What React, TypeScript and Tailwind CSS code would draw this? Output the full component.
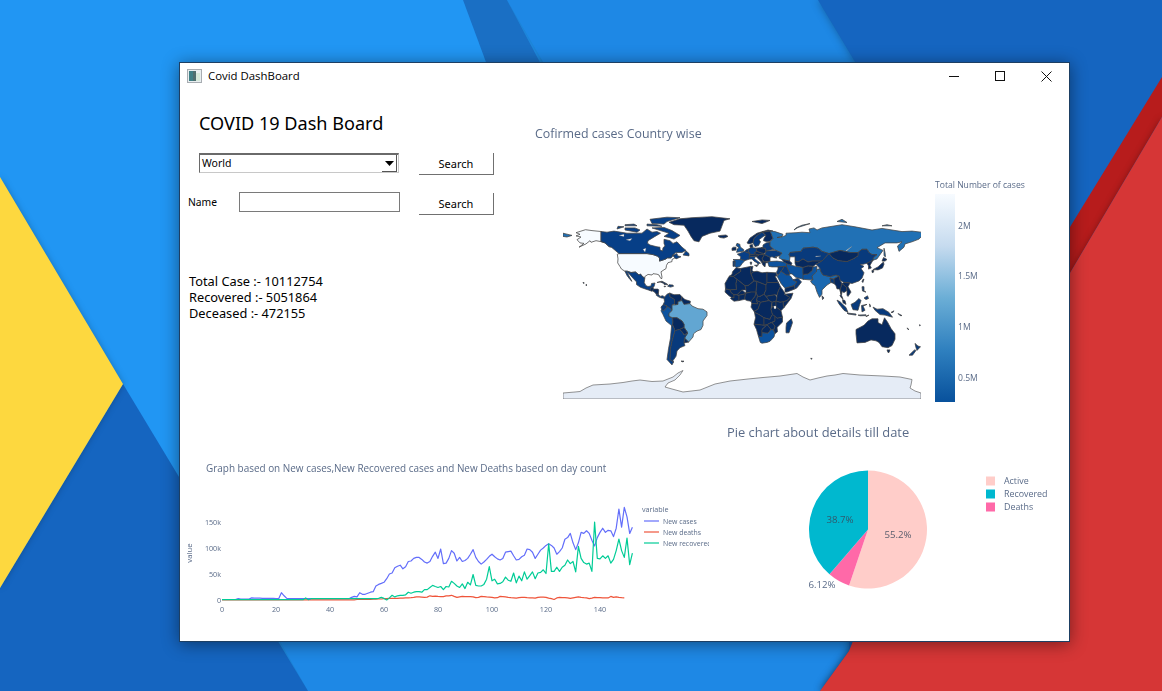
import React from "react";

const D = "#07295e", C = "#083a7c", N = "#073f87", M = "#0d539f", I = "#1a68b0", R = "#2171b5", B = "#62a6d2", U = "#f7fbff", W = "#ffffff";

const land: [string, number[]][] = [
  [R, [-179,68,-170,66,-175,64.5,-179,65]],
  [U, [-141,69.6,-141,60.3,-137,59,-133,55.5,-130.5,55,-135,59,-140,60,-146,61,-151,59.5,-152,61,-156,58,-163,55,-158,58.5,-162,59,-165,62,-161,64.5,-166,65.5,-162,67,-166,68.5,-156.5,71.3,-150,70.5]],
  [U, [-124.7,48.4,-123,49,-95,49,-89,48,-84.5,46.5,-82.5,45,-82.5,42,-79,43,-76,44,-74.7,45,-71,45,-69,47.3,-67,45,-70,43.5,-70,41.5,-74,40.5,-75.5,38,-76,35,-78,33.8,-81,32,-80,27,-80.5,25.2,-82,27,-83,29,-85,29.7,-89,30.2,-90,29,-94,29.5,-97.2,27.5,-97.2,26,-99.5,27.5,-101.5,29.8,-103,29,-106.5,31.8,-111,31.3,-114.8,32.5,-117.1,32.5,-120.5,34.5,-122,36.8,-124.3,40.3,-124,44]],
  [N, [-141,69.6,-135,69,-128,70,-115,68,-108,68,-100,68,-95,72,-90,69,-85,69.5,-81.5,68,-87,65,-94,61,-94.5,58.7,-92,57,-85,55.3,-82,55,-82,52.5,-79.5,51.3,-79,54.5,-77,56,-78,58.5,-78,62.3,-72,61,-69,58.5,-65,60,-60,55,-56,52,-60,50,-66,50,-70,47,-65,49,-64.5,47,-61,46,-66,44,-67,45,-69,47.3,-71,45,-74.7,45,-76,44,-79,43,-82.5,42,-82.5,45,-84.5,46.5,-89,48,-95,49,-123,49,-130,54.5,-130.5,55,-133,55.5,-137,59,-141,60.3]],
  [N, [-62,66,-68,62.5,-73,64,-78,65,-73,68,-80,70,-90,73,-78,73.5,-70,70.5]],
  [N, [-117,71,-105,69,-102,71,-107,73,-117,73]],
  [N, [-90,77,-78,76.5,-75,79,-62,82.5,-75,83,-92,81]],
  [N, [-125,72,-118,74,-124,74.5]],
  [N, [-95,75,-80,74.5,-85,76,-95,76.5]],
  [N, [-117,75,-105,75,-108,76.5,-117,76]],
  [N, [-59,47.7,-53,46.8,-53,49,-56,51.5]],
  [W, [-123,66,-118,67,-118,65]],
  [W, [-116,62,-110,63,-112,61]],
  [W, [-99,53,-96,54,-97,50.5]],
  [D, [-73,78.2,-68,76,-58,75.5,-54,70,-51,65,-48,61,-43,60,-40,65,-32,68,-22,70,-20,75,-18,80,-12,81.5,-30,83.5,-50,82.5,-62,81.5]],
  [D, [-24,65.5,-22,64,-18,63.5,-14,65,-16,66.4,-21,66]],
  [N, [-117.1,32.5,-114.8,32.5,-111,31.3,-106.5,31.8,-103,29,-101.5,29.8,-99.5,27.5,-97.2,26,-97.8,22,-96,19,-94,18.2,-91,18.7,-90.5,21,-87,21.5,-88,18,-89,17.8,-91,17,-92,14.5,-96,15.7,-101.5,17.5,-105.5,20,-105.5,22.5,-109,26,-112.7,30,-114.7,31.5,-113,28,-110,23,-112,24.8,-115,28.5]],
  [D, [-92,14.5,-91,17,-89,17.8,-88.5,15.8,-89.5,14,-90.5,13.8]],
  [D, [-89.5,14,-88.5,15.8,-84,15.8,-83.2,15,-83.7,11,-85.7,11,-87.5,13]],
  [C, [-85.7,11,-83.7,11,-82,9,-79.5,9.6,-77.3,8.5,-78,7.3,-80.5,7.5,-83,8.3,-85.7,10]],
  [D, [-85,22,-80,23.2,-75,20.7,-74.2,20,-77.7,19.9,-78,21,-82,22.5]],
  [C, [-74.4,18.5,-73,19.9,-69,19.5,-68.5,18.4,-71.5,17.7]],
  [C, [-78,18.5,-76.3,18.2,-77.5,17.8]],
  [C, [-156,20.2,-155,19.6,-156,19]],
  [C, [-159,22.2,-157.7,21.5,-158.5,21]],
  [C, [-77.3,8.5,-75,11,-72,12.2,-72.2,9,-67.5,6.2,-67.5,2,-70,1,-69.5,-4.2,-72,-2.3,-75,-0.1,-78.8,1.4,-77.5,4,-78,7.3]],
  [D, [-72,12,-68,10.6,-62,10.7,-60,8.5,-61,5,-64,4,-64,1.5,-67,1,-67.5,2,-67.5,6.2,-72.2,9]],
  [D, [-60,8.5,-57,6,-51.6,4.5,-52,2.2,-58,1.5,-60,1.5,-61,5]],
  [C, [-78.8,1.4,-75,-0.1,-75.5,-2,-78.5,-4.8,-80.3,-3.4,-81,-1]],
  [M, [-81,-4.5,-80.3,-3.4,-78.5,-4.8,-75.5,-2,-75,-0.1,-72,-2.3,-69.9,-4.2,-73,-7,-73,-9.5,-69.5,-11,-69,-15,-69.5,-17.5,-70.4,-18.3,-76,-14,-79,-8]],
  [B, [-60,5,-58,1.5,-52,2.2,-50,0,-44,-2.5,-39,-3,-35,-5.5,-35,-9,-39,-14,-39,-18,-41,-22,-45,-23.5,-48.5,-26,-49,-29,-53.4,-33.7,-57.5,-30,-54.5,-25.5,-55,-24,-58,-20,-58,-17,-60,-14,-65,-11,-69.5,-11,-73,-9.5,-73,-7,-69.9,-4.2,-70,1,-67,1,-64,1.5,-64,4]],
  [D, [-69.5,-11,-65,-11,-60,-14,-58,-17,-58,-20,-62.5,-22,-67,-23,-69.5,-17.5,-69,-15]],
  [D, [-62.5,-22,-58,-20,-55,-24,-54.5,-25.5,-58,-27,-60,-24]],
  [D, [-57.5,-30,-53.4,-33.7,-58,-34.5]],
  [N, [-70.4,-18.3,-69.5,-17.5,-67,-23,-70,-33,-71.5,-40,-72,-50,-68.5,-52.3,-70,-55,-75,-50,-73.5,-40,-71.5,-30]],
  [C, [-67,-23,-62.5,-22,-60,-24,-58,-27,-54.5,-25.5,-57.5,-30,-58,-34.5,-57,-37,-62,-39,-65,-42,-66,-47,-69,-51,-68.5,-52.3,-72,-50,-71.5,-40,-70,-33]],
  [D, [-61,-51.5,-58,-51.5,-59,-52.3]],
  [M, [-5.5,50.2,1.5,51.2,1.7,52.8,-1,54.5,-2,56,-2,57.6,-5,58.6,-6,56.5,-3,54.5,-5,53,-5,51.7]],
  [D, [-10,52,-6,52.2,-6,55,-8.5,55,-10,54]],
  [N, [-1.8,43.4,3,42.5,7.5,43.8,8,49,2.5,51,-1.5,49.5,-4.7,48.4,-1.2,46]],
  [M, [-9,43.5,-1.8,43.4,3,42.5,0,39.5,-2,36.8,-5.5,36,-7.3,37.2,-7,42]],
  [C, [-9,42,-7,42,-7.3,37.2,-9,37]],
  [N, [6,51,7,53.5,9,54.8,14,54,15,51,12.5,50,13.5,48.5,8,47.7,8,49]],
  [C, [2.5,51,8,49,6,51,7,53.5,4.5,52.5]],
  [D, [7,46,8,47.7,13.5,48.5,17,48,16,46.6,10,46.5]],
  [N, [7.5,43.8,7,46,13.7,46.5,12.5,44.5,16,41.7,18.5,40,16.5,39.5,16,38,15.5,40,12,42,10,44]],
  [C, [12.5,38,15.5,38.2,15,36.8]],
  [C, [8.2,41,9.7,41,9.5,39,8.5,39]],
  [D, [14,54,19,54.5,23.5,54,24,50.5,22,49,19,49.5,15,51]],
  [D, [12.5,50,15,51,19,49.5,22,49,22.5,48,17,48,13.5,48.5]],
  [D, [13.7,46.5,16,46.6,17,48,22.5,48,20,44,22,41,19.5,41,17,43.5]],
  [D, [19.5,41,26,41,23.5,40,23,36.5,21,38]],
  [D, [22.5,48,28,45.5,28,42,22.5,41.2,20,44]],
  [C, [24,50.5,24,51.5,34,52,40,49.5,38,47,33,46,35,45,33,45,30,46,28,45.5,22.5,48]],
  [C, [23.5,54,24,51.5,32,53,28,56,28,59.5,24,59,21,57,21,55,19,54.5]],
  [D, [5,59,7,58,10.5,59,11,59,12,63,15,66,20,69,28,70,31,70,26,71,15,68,8,63.5]],
  [C, [11,59,13,55.5,16.5,56.5,18.5,60,17,62,22,65.5,24,66,20,69,15,66,12,63]],
  [D, [24,66,22,63,21.5,61,25,60,28,60.5,31,63,29,68,28,70,20.5,69]],
  [D, [8,55,9,54.8,11,55,10.5,57.5,8,57]],
  [R, [28,70,33,69.5,41,67,40,65,35,64,38,64,44,66,44,68,54,68.5,60,69,68,68.5,67,72,72,73,75,71,80,73,87,74,100,76,113,74,130,71,140,72.5,160,69.5,170,70,179.5,69,179.5,65,177,62.5,170,60,163,58,162,55,157,51,155.5,56,160,60,155,59,143,59,135,54.5,141,52,135,44,131,42.8,131,45,135,48,130,48,127,50,125,53,120,53,116,50,108,50,98,52,87,49,80,51,76,54,71,55,61,54,59,51,48,50,47,48,48,46,47.5,42,40,43.5,37,45,38,47,40,49.5,34,52,32,53,28,56,28,60,31,63,29,68]],
  [W, [104,52,110,55.8,109,55,104.5,51.5]],
  [R, [142,54,143,50,143.5,46,142,47,142,50]],
  [R, [52,71,56,73.5,68,77,60,75.5,54,73]],
  [R, [95,79,105,78,100,81]],
  [R, [140,75,150,75,145,76]],
  [D, [10,79,20,80.5,28,80,20,77]],
  [C, [48,50,59,51,61,54,71,55,76,54,80,51,87,49,80,42,70,42,66,41,61,44,56,41,53,42,53,46,48,46,47,48]],
  [W, [73.5,46,79,46.8,74,46.6]],
  [D, [53,42,56,41,61,44,66,41,70,42,80,42,74,39,71,37,66,37.5,61,36,54,37.5,53,40]],
  [D, [40,43.5,47.5,42,50,40,49,38,44.5,39.5,42,41]],
  [M, [26,40,26,41.5,35,42,42,41,44.5,39.5,44.5,37,36,36.5,30,36.5,27,37]],
  [M, [44.5,39.5,49,38,54,37,61,36,61,31,63,27,61.5,25,57,26,54,26.5,50,30,48,30,46,34,44.5,37]],
  [C, [42,37,44.5,37,46,34,48,30,47,29,44,29,39,32.5,41,35]],
  [C, [36,36.5,42,37,41,35,39,32.5,37,29.5,35,29.5,34.5,31.5,36,34.5]],
  [M, [35,28,37,29.5,39,32.5,44,29,47,29,48.5,28,51,24.5,55,22.5,52,19,45,17,43,16.5,39,21]],
  [D, [43,13,43,16.5,45,17,52,19,53,16,45,13]],
  [C, [51,24.5,56,26,59.5,22.5,55,17,53,16,52,19,55,22.5]],
  [M, [61,25,67,24.5,71,24.5,70,28,74.5,32,75,37,71,36.5,70,33,66,30,61,29.5]],
  [D, [61,36,66,37.5,71,37,71,36.5,70,33,66,30,61,29.5]],
  [I, [70,21,73,19,75,13,77.5,8,80,11,80,15,85,19.5,89,22,88,26,92,25.5,97,28,94,29,88,27.5,81,29,79,32,78,35,74.5,34,74.5,32,70,28,71,24.5,68.5,23.5]],
  [D, [80,9.5,82,7.5,80.5,6]],
  [C, [74,39,80,42,87,49,91,45,96,42.5,105,41.5,112,44.5,116,47,116,50,120,53,125,53,127,50,130,48,135,48,131,45,131,42.8,125,40,121,39,118,39,122,37,119,35,122,31,120,26,117,23.5,110,21,108,21.5,102,22,98,24,97,28,94,29,88,27.5,81,29,79,32,78,35]],
  [D, [87,49,98,52,108,50,116,50,116,47,112,44.5,105,41.5,96,42.5,91,45]],
  [D, [125,40,131,42.8,128,38,129.3,35.5,126.5,34.5,126.5,37.5]],
  [D, [131,34,136,36.5,140,40,141.5,41,142,39,140.5,35.5,136,33.7]],
  [D, [140,42,141.5,45.3,145,43.5,143,42]],
  [D, [130,33.5,132,33,131,31,130,31.5]],
  [D, [92,21,92,25.5,97,28,98,24,100,21,98.5,16,99,11,97.5,16,95,16,94,19]],
  [D, [98.5,16,100,21,104.5,17.5,105,14.5,102,12.5,100,13.5,99.5,10,101,6.5,99,8,98,10,99,11]],
  [D, [100,21,102,22,108,21.5,106,18,109,13,106,9,105,10,105,14.5,104.5,17.5]],
  [D, [100.5,6,103,5,104,1.5,101,3]],
  [C, [88,26,92,25,92,21,89,22]],
  [C, [95,5.5,98,4,104,-1.5,106,-6,102,-4,97,2]],
  [C, [105,-6.5,114,-7.5,114,-8.5,106,-7.5]],
  [C, [116,-8.5,124,-8.2,124,-9,118,-9.2]],
  [C, [124,-10,127,-8.5,124,-9.5]],
  [C, [109,1.5,113,3.5,117,7,119,5,117.5,1,116,-4,111,-3.5]],
  [C, [119.5,0.5,125,1.5,121,0,123,-4,120,-5.5]],
  [C, [127.5,2,128.5,0,128,-1]],
  [C, [131,-1,135,-3,141,-2.5,147,-6,150.5,-10.5,143,-8.5,138,-8,133,-4]],
  [C, [149,-6,152,-4.5,151,-6]],
  [C, [156,-7,160,-9,158,-9]],
  [C, [165,-20.5,167,-22,166,-22]],
  [C, [177.5,-17.5,178.5,-18,177.5,-18.5]],
  [C, [120,18,122,18,122,14,124,13,120.5,14]],
  [C, [122,7.5,125.5,9.5,126.5,7,124,6]],
  [D, [121,25,122,25,120.8,22,120,23]],
  [D, [114,-22,122,-18,126,-14,130,-12,136,-12,136,-15.5,140,-17.5,142.5,-11,145.5,-15,149,-21,153,-26,153,-31,150,-37,146,-39,140,-38,137,-34,134,-32.5,129,-31.7,123,-34,115,-34.5,114,-26]],
  [D, [145,-41,148,-41,147,-43.5,146,-43.5]],
  [C, [173,-35,176,-37.5,178.5,-38,175,-41.5,174,-39]],
  [C, [172.5,-41,174,-41.5,170.5,-46,167,-46]],
  [C, [49.3,-12,50.5,-15.5,47,-25,44,-25,44,-20,44.5,-16]],
  [C, [68.8,-48.8,70.2,-49.2,69.2,-49.8]],
  [D, [-6,35.8,-2,35,-1,32.5,-5,30,-8.7,27.7,-13,27.7,-10,29.5,-9.5,32]],
  [D, [-13,27.7,-8.7,27.7,-5,25,-6,21,-5.5,15.5,-12,15,-16.5,16,-17,21]],
  [D, [-2,35,8.5,37,9,30,12,23.5,6,19,3,19,-5,25,-8.7,27.7,-5,30,-1,32.5]],
  [D, [8.5,37,11,37,10,33.5,11.5,32,9,30]],
  [D, [11.5,32,15,32.5,20,31,25,31.5,25,20,24,19.5,15,23,12,23.5,9,30]],
  [D, [25,31.5,34,31,35,28,33,28,36.5,22,25,22]],
  [D, [-12,15,-5.5,15.5,-6,21,-5,25,3,19,4,15,0,15,-5,10.5,-8,10.5,-11,12.5]],
  [D, [3,19,6,19,12,23.5,15,23,14,13,9,13,4,12,4,15]],
  [D, [15,23,24,19.5,24,15,22,11,18,9,15.5,9,14,13]],
  [D, [24,19.5,25,22,36.5,22,38.5,18,36.5,14.5,35,10,33,10.5,27,9.5,24,9,22,11,24,15]],
  [D, [24,9,27,9.5,33,10.5,35,8,34,4.5,30,3.5,27,5]],
  [D, [36.5,14.5,38.5,18,43,12,42.5,11,48,8,45,5,41.5,4,38,3.5,34,4.5,35,8,35,10]],
  [D, [43,11,51,12,49,7,42,-1.5,41,2,41.5,4,45,5,48,8]],
  [D, [-16.5,16,-12,15,-11,12.5,-8,10.5,-8,7.5,-10.5,8,-13,9.5,-17,13]],
  [D, [-8,10.5,-5,10.5,-3,9.5,-3,5,-8,4.5,-11.5,7,-10.5,8,-8,7.5]],
  [D, [-5,10.5,0,15,4,12,2,11,-3,10]],
  [D, [-3,9.5,-3,10,2,11,3.5,12,2.7,6.3,-3,5]],
  [D, [2.7,6.3,3.5,12,4,12,9,13,14,13,13,9,9,4.5,5,5]],
  [D, [9,4.5,13,9,14,13,15.5,9,14.5,5,16,2,9.8,2.3]],
  [D, [14.5,5,15.5,9,18,9,22,11,24,9,27,5,18.5,3.5]],
  [D, [9.8,2.3,16,2,14.5,5,18.5,3.5,16,-3,12,-5,9,-1]],
  [D, [18.5,3.5,27,5,30,3.5,29,-3,30.5,-8,28.5,-11,28,-12.5,22,-11,17,-8,12.5,-6,12,-5,16,-3]],
  [D, [30,3.5,34,4.5,34,0,30,-1]],
  [D, [34,4.5,38,3.5,41.5,4,41,2,42,-1.5,39,-4.5,34,-1,34,0]],
  [D, [30,-1,34,-1,39,-4.5,40.5,-10.5,35,-11.5,30.5,-8,29,-3]],
  [W, [32,0,34,0,34,-2.5,32,-2.5]],
  [D, [12.5,-6,17,-8,22,-11,22,-18,12,-17,13.5,-11]],
  [D, [22,-11,28,-12.5,28.5,-11,30.5,-8,33,-9.5,33,-14,28,-16,25,-17.5,22,-18]],
  [D, [33,-9.5,35,-11.5,40.5,-10.5,40.5,-15,35,-20,35.5,-24,32.8,-26,31.5,-22.5,33,-19,30,-15.5,33,-14]],
  [D, [25,-17.5,28,-16,30,-15.5,33,-19,31.5,-22.5,29,-22]],
  [D, [12,-17,22,-18,25,-17.5,20,-22,20,-28.5,16.5,-28.5,14.5,-22]],
  [D, [20,-22,25,-17.5,29,-22,26,-25.5,20,-25]],
  [M, [16.5,-28.5,20,-28.5,20,-25,26,-25.5,29,-22,31.5,-22.5,32.8,-26,32,-29,28,-33,25,-34,20,-34.8,18.3,-34]],
];

const toPoints = (c: number[]) => {
  const out: string[] = [];
  for (let i = 0; i < c.length; i += 2) out.push(`${(742 + c[i]).toFixed(1)},${(306 - 1.07 * c[i + 1]).toFixed(1)}`);
  return out.join(" ");
};

const flat = (n: number, v: number) => Array(n).fill(v) as number[];

const cases = [1,1,1,1,1,1,2.5,2,2,2,2,4,3.5,3.5,3.5,3,3,3,3,3,2.5,2.5,14,8,3,...flat(23,2.5),5,7,6,14,11,11,13,15,16,27,30,32,34,41,50,52,62,65,67,60,64,74,75,80,82,82,78,73,71,74,84,92,80,98,70,71,80,95,90,75,82,74,76,80,88,97,82,74,69,73,78,84,88,83,79,77,80,92,93,94,85,77,78,83,86,98,97,92,80,88,96,100,105,108,105,100,88,93,100,117,120,128,110,97,110,130,128,133,128,115,104,120,130,138,130,134,133,122,138,175,140,178,160,128,140];
const recovered = [...flat(31,0.6),4,0.5,...flat(25,2.5),3,5,3,0,4,9,6,8,9,9,10,15,13,15,16,16,15,20,20,24,28,26,24,26,20,26,25,36,32,27,24,31,22,34,29,49,28,27,27,30,40,64,37,40,31,32,35,44,38,36,52,33,46,37,54,40,47,54,41,52,53,58,51,108,55,55,63,55,63,67,77,70,74,54,103,80,72,69,71,55,150,80,79,85,80,85,71,78,95,117,95,82,119,68,90];
const deaths = [...flat(50,0.4),1,1,1,1,1.2,1.4,1.5,1.8,2,2,2.5,2.5,3,3,3,3,3.5,3.5,4,4,4.5,5,6,6,5.5,5,5.5,8,7,7.5,7,6.5,6.5,8,8,9,7,5,6,7,6.5,6.5,6.5,6,4.5,5,7,6.5,6,5.5,5,4,4.5,7,6.5,6,5,4.5,4,3.5,4.5,5,5,4.5,4,4,3.5,5,5.5,5.5,5,3.5,2.5,1,4,5,4.5,4.5,4,3,4,5,6,5,4.5,4,2.5,3.5,5,4.5,4.5,4,4,4,7,5,6,5,4.5,4];

const linePoints = (d: number[]) => d.map((v, i) => `${(222 + i * 2.7).toFixed(1)},${(600 - v * 0.52).toFixed(1)}`).join(" ");

const pieSlice = (from: number, to: number) => {
  const cx = 868, cy = 529.5, r = 59;
  const p = (f: number) => `${cx + r * Math.sin(f * 2 * Math.PI)} ${cy - r * Math.cos(f * 2 * Math.PI)}`;
  return `M${cx} ${cy}L${p(from)}A${r} ${r} 0 ${to - from > 0.5 ? 1 : 0} 1 ${p(to)}Z`;
};

const PLOT = "#5a6b88";

function SearchButton() {
  return (
    <button className="block w-[75px] h-[22px] bg-white border-r border-b border-[#707070] text-[11px] text-black font-['Noto_Sans',sans-serif] leading-none">
      Search
    </button>
  );
}

function Wallpaper() {
  return (
    <svg className="absolute inset-0" width="1162" height="691" viewBox="0 0 1162 691">
      <rect width="1162" height="691" fill="#2196f3" />
      <polygon points="507,0 818,0 860,70 849,651 820,691 308,691 200,500 543,62" fill="#1e88e5" className="drop-shadow-[0_0_4px_rgba(0,0,0,0.25)]" />
      <polygon points="463,0 507,0 560,100 500,100" fill="#1a6fc4" />
      <polygon points="123,384 308,691 0,691 0,588" fill="#1565c0" />
      <polygon points="0,177 123,384 0,588" fill="#fdd83f" className="drop-shadow-[0_0_3px_rgba(0,0,0,0.25)]" />
      <polygon points="818,0 1162,0 1162,691 820,691 849,651 860,70" fill="#1565c0" className="drop-shadow-[0_0_4px_rgba(0,0,0,0.3)]" />
      <polygon points="1162,77 1162,117 1070,273 1000,330 1000,300 1070,227" fill="#b71c1c" />
      <polygon points="1162,117 1162,691 820,691 849,651 950,400 1070,273" fill="#d63636" className="drop-shadow-[0_0_3px_rgba(0,0,0,0.3)]" />
    </svg>
  );
}

function TitleBar() {
  return (
    <div className="flex items-center h-[26px] mb-[3px] shrink-0">
      <svg className="ml-[7px]" width="15" height="14" viewBox="0 0 15 14">
        <rect x="0.5" y="0.5" width="14" height="13" fill="#e8eef0" stroke="#a8adb2" />
        <rect x="2" y="2" width="4" height="10" fill="#3f7f86" />
        <rect x="6" y="2" width="3" height="10" fill="#4f6f70" />
        <rect x="9" y="4" width="4" height="8" fill="#d5e8da" />
      </svg>
      <span className="ml-[6px] text-[11.4px] text-black font-['Open_Sans',sans-serif]">Covid DashBoard</span>
      <div className="ml-auto flex h-full">
        <div className="w-[46px] flex items-center justify-center">
          <svg width="10" height="10" viewBox="0 0 10 10"><path d="M0 5.5H10" stroke="#111" /></svg>
        </div>
        <div className="w-[46px] flex items-center justify-center">
          <svg width="10" height="10" viewBox="0 0 10 10"><rect x="0.5" y="0.5" width="9" height="9" fill="none" stroke="#111" /></svg>
        </div>
        <div className="w-[46px] flex items-center justify-center">
          <svg width="11" height="11" viewBox="0 0 11 11"><path d="M0.5 0.5L10.5 10.5M10.5 0.5L0.5 10.5" stroke="#111" /></svg>
        </div>
      </div>
    </div>
  );
}

function LeftPanel() {
  return (
    <div className="w-[330px] shrink-0 flex flex-col font-['Noto_Sans',sans-serif] text-black">
      <h1 className="ml-[19px] mt-[18px] h-[26px] text-[18.1px] leading-[26px] font-normal whitespace-nowrap">COVID 19 Dash Board</h1>
      <div className="mt-[17px] ml-[19px] flex items-start">
        <div className="w-[200px] h-[20px] flex items-center justify-between border-t-2 border-l border-[#6a6a6a] border-r border-r-[#c8c8c8] border-b border-b-[#c8c8c8] text-[10.5px] pl-[2px]">
          <span>World</span>
          <span className="w-[15px] h-[17px] flex items-center justify-center border-r border-b border-[#555] bg-white mr-[1px]">
            <svg width="9" height="5" viewBox="0 0 9 5"><path d="M0 0H9L4.5 5Z" fill="#000" /></svg>
          </span>
        </div>
        <div className="ml-[20px]"><SearchButton /></div>
      </div>
      <div className="mt-[17px] flex items-start">
        <span className="ml-[8px] w-[51px] h-[22px] flex items-center text-[10.3px]">Name</span>
        <input className="w-[161px] h-[20px] border border-[#7a7a7a] bg-white outline-none" readOnly />
        <div className="ml-[19px] mt-[1px]"><SearchButton /></div>
      </div>
      <div className="mt-[58px] ml-[9px] text-[12.8px] leading-[16px] whitespace-nowrap">
        <p>Total Case :- 10112754</p>
        <p>Recovered :- 5051864</p>
        <p>Deceased :- 472155</p>
      </div>
    </div>
  );
}

function MapChart() {
  const ticks: [string, number][] = [["2M", 226], ["1.5M", 276], ["1M", 327], ["0.5M", 378]];
  return (
    <svg className="blur-[0.3px] font-['Open_Sans',sans-serif]" width="559" height="328" viewBox="510 92 559 328">
      <defs>
        <linearGradient id="cb" x1="0" y1="0" x2="0" y2="1">
          <stop offset="0" stopColor="#f7fbff" />
          <stop offset="0.25" stopColor="#c6dbef" />
          <stop offset="0.5" stopColor="#6baed6" />
          <stop offset="0.75" stopColor="#2f80bf" />
          <stop offset="1" stopColor="#08519c" />
        </linearGradient>
        <clipPath id="mapclip"><rect x="563" y="205" width="358" height="194" /></clipPath>
      </defs>
      <text x="535" y="138" fontSize="12.4" fill={PLOT}>Cofirmed cases Country wise</text>
      <g clipPath="url(#mapclip)">
        <polygon points="563,393 575,392 580,391.5 586,388 593,385 610,384 623,382.5 632,381 640,380 652,381.5 663,381 668,379 673,377 678,373 683,370.5 680,375 675,380 668,383 665,387 672,389 683,392 700,390 715,384 730,381 748,379 763,377.5 780,376 797,373.5 803,377 810,380 818,378 827,376 835,375 843,373.5 860,375 883,376 900,377 912,379.5 911,385 910,388 915,391 921,393 921,399 563,399" fill="#e5ecf6" stroke="#666" strokeWidth="0.7" />
        {land.map(([color, c], i) => (
          <polygon key={i} points={toPoints(c)} fill={color} stroke={color === W ? "#777" : "#444"} strokeWidth={color === W ? 0.3 : 0.75} strokeLinejoin="round" />
        ))}
      </g>
      <rect x="935" y="194" width="20" height="208" fill="url(#cb)" />
      <text x="935" y="188" fontSize="8.6" fill={PLOT}>Total Number of cases</text>
      {ticks.map(([t, y]) => (
        <text key={t} x="958" y={y + 3} fontSize="8.6" fill={PLOT}>{t}</text>
      ))}
    </svg>
  );
}

function LineChart() {
  const xt = [0, 20, 40, 60, 80, 100, 120, 140];
  const yt: [string, number][] = [["150k", 522], ["100k", 548], ["50k", 574], ["0", 600]];
  const legend: [string, string, number][] = [["New cases", "#636efa", 521], ["New deaths", "#ef553b", 532], ["New recovered", "#00cc96", 543]];
  return (
    <svg className="mt-[35px] blur-[0.3px] font-['Open_Sans',sans-serif]" width="529" height="185" viewBox="180 455 529 185">
      <text x="206" y="472" fontSize="9.95" fill={PLOT}>Graph based on New cases,New Recovered cases and New Deaths based on day count</text>
      {xt.map((v) => (
        <text key={v} x={222 + v * 2.7} y="612" fontSize="7.2" fill={PLOT} textAnchor="middle">{v}</text>
      ))}
      {yt.map(([t, y]) => (
        <text key={t} x="221" y={y + 2.5} fontSize="7.2" fill={PLOT} textAnchor="end">{t}</text>
      ))}
      <text x="192" y="553" fontSize="7.8" fill={PLOT} textAnchor="middle" transform="rotate(-90 192 553)">value</text>
      <polyline points={linePoints(cases)} fill="none" stroke="#636efa" strokeWidth="1.2" strokeLinejoin="round" />
      <polyline points={linePoints(deaths)} fill="none" stroke="#ef553b" strokeWidth="1.2" strokeLinejoin="round" />
      <polyline points={linePoints(recovered)} fill="none" stroke="#00cc96" strokeWidth="1.2" strokeLinejoin="round" />
      <text x="642" y="512" fontSize="7.2" fill={PLOT}>variable</text>
      {legend.map(([t, c, y]) => (
        <g key={t}>
          <line x1="644" x2="659" y1={y} y2={y} stroke={c} strokeWidth="1.2" />
          <text x="663" y={y + 2.5} fontSize="6.9" fill={PLOT}>{t}</text>
        </g>
      ))}
    </svg>
  );
}

function PieChart() {
  const legend: [string, string, number][] = [["Active", "#ffcdc9", 481], ["Recovered", "#00b8cf", 494], ["Deaths", "#ff69a8", 507]];
  return (
    <svg className="ml-auto blur-[0.3px] font-['Open_Sans',sans-serif]" width="359" height="221" viewBox="710 420 359 221">
      <text x="727" y="437" fontSize="12.9" fill={PLOT}>Pie chart about details till date</text>
      <path d={pieSlice(0, 0.552)} fill="#ffcdc9" />
      <path d={pieSlice(0.552, 0.6132)} fill="#ff69a8" />
      <path d={pieSlice(0.6132, 1)} fill="#00b8cf" />
      <text x="898" y="537.5" fontSize="9.7" fill="#5b5f6e" textAnchor="middle">55.2%</text>
      <text x="840" y="522.5" fontSize="9.7" fill="#2f5a6e" textAnchor="middle">38.7%</text>
      <text x="822" y="588" fontSize="9.7" fill={PLOT} textAnchor="middle">6.12%</text>
      {legend.map(([t, c, y]) => (
        <g key={t}>
          <rect x="986" y={y - 4.5} width="9" height="9" fill={c} />
          <text x="1004" y={y + 3} fontSize="8.9" fill={PLOT}>{t}</text>
        </g>
      ))}
    </svg>
  );
}

export default function App() {
  return (
    <div className="relative w-[1162px] h-[691px] overflow-hidden">
      <Wallpaper />
      <div className="absolute left-[179px] top-[62px] w-[891px] h-[580px] bg-white border border-[#1d3f63] flex flex-col shadow-[0_2px_16px_rgba(0,0,0,0.45)]">
        <TitleBar />
        <div className="flex h-[328px] shrink-0">
          <LeftPanel />
          <MapChart />
        </div>
        <div className="flex flex-1 min-h-0">
          <LineChart />
          <PieChart />
        </div>
      </div>
    </div>
  );
}
